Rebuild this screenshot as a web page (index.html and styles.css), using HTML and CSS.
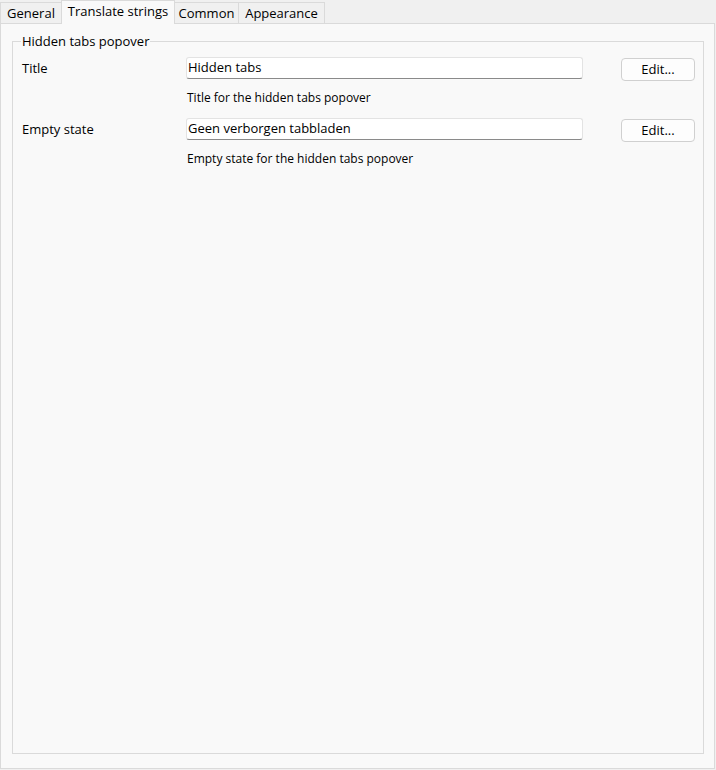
FILE: index.html
```html
<!DOCTYPE html>
<html>
<head>
<meta charset="utf-8">
<title>Translate strings</title>
<link rel="stylesheet" href="styles.css">
</head>
<body>
<div class="window">
  <div class="tabs">
    <div class="tab tab-general">General</div>
    <div class="tab tab-translate active">Translate strings</div>
    <div class="tab tab-common">Common</div>
    <div class="tab tab-appearance">Appearance</div>
  </div>
  <div class="panel">
    <fieldset class="group">
      <legend class="group-title">Hidden tabs popover</legend>
      <div class="field">
        <div class="label">Title</div>
        <div class="input">Hidden tabs</div>
        <button class="btn">Edit...</button>
        <div class="desc">Title for the hidden tabs popover</div>
      </div>
      <div class="field">
        <div class="label">Empty state</div>
        <div class="input">Geen verborgen tabbladen</div>
        <button class="btn">Edit...</button>
        <div class="desc">Empty state for the hidden tabs popover</div>
      </div>
    </fieldset>
  </div>
</div>
</body>
</html>
```
FILE: styles.css
```css
html, body {
  margin: 0;
  padding: 0;
  background: #f0f0f0;
}
body {
  font-family: "Segoe UI", "Open Sans", "Noto Sans", sans-serif;
  font-size: 13px;
  color: #000;
}
.window {
  width: 716px;
  height: 770px;
}
.tabs {
  display: flex;
  align-items: flex-end;
  height: 23px;
  padding-left: 0;
}
.tab {
  box-sizing: border-box;
  height: 21px;
  padding: 0;
  border: 1px solid #dadada;
  border-bottom: none;
  background: #f0f0f0;
  line-height: 20px;
  margin-right: -1px;
  text-align: center;
  white-space: nowrap;
}
.tab-general { width: 62px; }
.tab-translate { width: 114px; }
.tab-common { width: 65px; }
.tab-appearance { width: 87px; }
.tab.active {
  height: 24px;
  margin-bottom: -1px;
  background: #f9f9f9;
  line-height: 21px;
  position: relative;
  z-index: 1;
}
.panel {
  box-sizing: border-box;
  width: 715px;
  height: 746px;
  border: 1px solid #dadada;
  background: #f9f9f9;
  padding: 9px 11px 14px 11px;
}
.group {
  box-sizing: border-box;
  margin: 0;
  width: 692px;
  height: 721px;
  border: 1px solid #dadada;
  padding: 8px 8px 0 9px;
}
.group-title {
  padding: 0 1px;
  margin-left: -1px;
  line-height: 16px;
}
.field {
  display: grid;
  grid-template-columns: 164px 397px 38px 74px;
  grid-template-rows: 23px auto;
  align-items: center;
  margin-bottom: 12px;
}
.label {
  grid-column: 1;
  padding-bottom: 1px;
}
.input {
  grid-column: 2;
  box-sizing: border-box;
  height: 22px;
  align-self: start;
  background: #fff;
  border: 1px solid #e3e3e3;
  border-bottom: 1px solid #8a8a8a;
  border-radius: 3px;
  padding: 0 2px 0 1px;
  line-height: 19px;
}
.btn {
  grid-column: 4;
  box-sizing: border-box;
  height: 23px;
  margin: 1px 0 0 0;
  align-self: start;
  background: #fdfdfd;
  border: 1px solid #d0d0d0;
  border-radius: 4px;
  font: inherit;
  color: #000;
  padding: 0 0 1px 0;
}
.desc {
  grid-column: 2;
  grid-row: 2;
  padding: 10px 0 0 1px;
  line-height: 16px;
  font-size: 12px;
}
```
